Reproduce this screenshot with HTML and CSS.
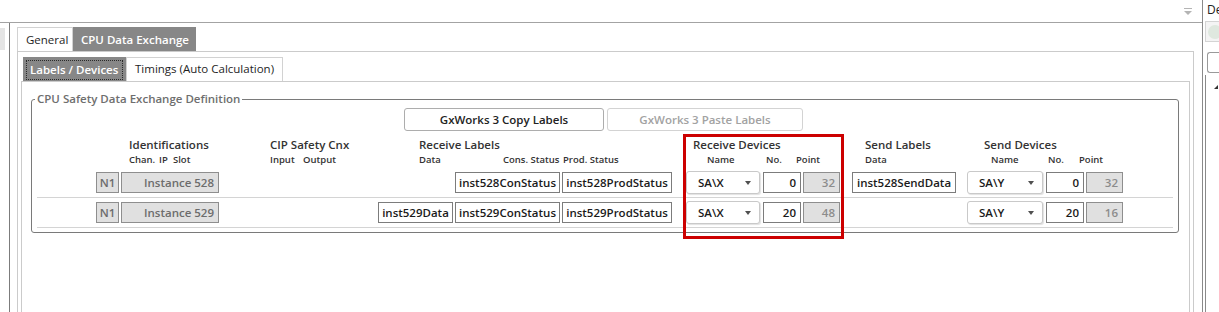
FILE: index.html
```html
<!DOCTYPE html>
<html>
<head>
<meta charset="utf-8">
<link rel="stylesheet" href="styles.css">
</head>
<body>
<div class="app">
  <div class="main">
    <div class="topbar">
      <svg class="pin" width="8" height="7" viewBox="0 0 8 7"><rect x="0" y="0" width="8" height="1" fill="#b4b4b4"/><path d="M0 3 H8 L4 7 Z" fill="#b4b4b4"/></svg>
    </div>
    <div class="body">
      <div class="leftpanel"><div class="leftchip"></div></div>
      <div class="workspace">
        <div class="tabs">
          <div class="tab">General</div>
          <div class="tab active">CPU Data Exchange</div>
        </div>
        <div class="tabpanel">
          <div class="subtabs">
            <div class="subtab active"><span class="focus">Labels / Devices</span></div>
            <div class="subtab">Timings (Auto Calculation)</div>
          </div>
          <div class="subpanel">
            <fieldset class="group">
              <legend>CPU Safety Data Exchange Definition</legend>
              <div class="btnrow">
                <div class="btn">GxWorks 3 Copy Labels</div>
                <div class="btn disabled">GxWorks 3 Paste Labels</div>
              </div>
              <div class="heads">
                <div class="hg g-ident">
                  <div class="ht">Identifications</div>
                  <div class="hs"><span class="w30">Chan.</span><span class="w14">IP</span><span>Slot</span></div>
                </div>
                <div class="hg g-cip">
                  <div class="ht">CIP Safety Cnx</div>
                  <div class="hs"><span class="w33">Input</span><span>Output</span></div>
                </div>
                <div class="hg g-rl">
                  <div class="ht">Receive Labels</div>
                  <div class="hs"><span class="w84">Data</span><span class="w60">Cons. Status</span><span>Prod. Status</span></div>
                </div>
                <div class="hg g-rd">
                  <div class="ht">Receive Devices</div>
                  <div class="hs"><span class="ml14 w59">Name</span><span class="w30">No.</span><span>Point</span></div>
                </div>
                <div class="hg g-sl">
                  <div class="ht">Send Labels</div>
                  <div class="hs"><span>Data</span></div>
                </div>
                <div class="hg g-sd">
                  <div class="ht">Send Devices</div>
                  <div class="hs"><span class="ml7 w57">Name</span><span class="w31">No.</span><span>Point</span></div>
                </div>
              </div>
              <div class="row">
                <div class="cell ro c-chan">N1</div>
                <div class="cell ro c-inst">Instance 528</div>
                <div class="cell c-data empty"></div>
                <div class="cell c-cons">inst528ConStatus</div>
                <div class="cell c-prod">inst528ProdStatus</div>
                <div class="combo c-rdn"><span>SA\X</span><i class="arrow"></i></div>
                <div class="cell num c-rno">0</div>
                <div class="cell pt c-rpt">32</div>
                <div class="cell c-send">inst528SendData</div>
                <div class="combo c-sdn"><span>SA\Y</span><i class="arrow"></i></div>
                <div class="cell num c-sno">0</div>
                <div class="cell pt c-spt">32</div>
              </div>
              <div class="row">
                <div class="cell ro c-chan">N1</div>
                <div class="cell ro c-inst">Instance 529</div>
                <div class="cell c-data">inst529Data</div>
                <div class="cell c-cons">inst529ConStatus</div>
                <div class="cell c-prod">inst529ProdStatus</div>
                <div class="combo c-rdn"><span>SA\X</span><i class="arrow"></i></div>
                <div class="cell num c-rno">20</div>
                <div class="cell pt c-rpt">48</div>
                <div class="cell c-send empty"></div>
                <div class="combo c-sdn"><span>SA\Y</span><i class="arrow"></i></div>
                <div class="cell num c-sno">20</div>
                <div class="cell pt c-spt">16</div>
              </div>
            </fieldset>
          </div>
        </div>
      </div>
    </div>
  </div>
  <div class="rightpanel">
    <div class="rp-title">De</div>
    <div class="rp-iconbox"><span class="rp-circle"></span></div>
    <div class="rp-field"></div>
    <div class="rp-tree"><span class="rp-tri"></span></div>
  </div>
  <div class="highlight"></div>
</div>
</body>
</html>
```
FILE: styles.css
```css
* { box-sizing: border-box; }
html, body { margin: 0; padding: 0; background: #fff; }
body { font-family: "Open Sans", "Noto Sans", sans-serif; font-size: 12px; color: #222; }

.app { position: relative; display: flex; width: 1219px; height: 312px; overflow: hidden; background: #fff; }

.main { width: 1202px; display: flex; flex-direction: column; }
.topbar { height: 22px; display: flex; justify-content: flex-end; align-items: flex-start; padding: 8px 10px 0 0; }
.pin { display: block; }

.body { flex: 1; display: flex; border-top: 1px solid #a3a3a3; }
.leftpanel { width: 10px; border-right: 1px solid #7c7c7c; padding-top: 5px; }
.leftchip { width: 5px; height: 22px; background: #e4e4e4; }

.workspace { flex: 1; padding: 4px 0 0 7px; display: flex; flex-direction: column; }

.tabs { display: flex; height: 24px; }
.tab { height: 24px; line-height: 23px; width: 56px; padding: 0 0 0 8px; border: 1px solid #d2d2d2; border-bottom: none; background: #fff; color: #1e1e1e; font-size: 11.5px; white-space: nowrap; overflow: hidden; }
.tab.active { width: 123px; background: #878787; border-color: #878787; color: #fff; font-weight: 600; padding: 0 0 0 7px; }

.tabpanel { width: 1177px; flex: 1; border: 1px solid #cbcbcb; border-bottom: none; padding: 5px 0 0 3px; display: flex; flex-direction: column; }

.subtabs { display: flex; height: 24px; margin-left: 2px; }
.subtab { height: 24px; line-height: 22px; width: 157px; padding: 0 0 0 8px; border: 1px solid #d2d2d2; border-bottom: none; color: #1e1e1e; font-size: 11.5px; white-space: nowrap; overflow: hidden; }
.subtab.active { width: 103px; background: #878787; border-color: #878787; color: #fff; font-weight: 600; padding: 2px; line-height: 18px; }
.subtab .focus { display: block; height: 20px; border: 1px dotted #2a2a2a; padding: 0 3px; }

.subpanel { width: 1169px; flex: 1; border: 1px solid #cbcbcb; border-bottom: none; padding: 9px 0 0 9px; }

.group { width: 1148px; margin: 0; padding: 0 0 4px 0; border: 1px solid #7a7a7a; border-radius: 3px; min-width: 0; }
.group legend { padding: 0 2px; margin-left: 3px; font-size: 11.5px; font-weight: 600; color: #6e6e6e; line-height: 16px; }

.btnrow { display: flex; gap: 3px; margin: 1px 0 0 372px; }
.btn { width: 200px; height: 23px; line-height: 21px; text-align: center; border: 1px solid #adadad; border-radius: 3px; background: #fff; font-weight: 600; color: #222; font-size: 11.5px; }
.btn.disabled { width: 196px; border-color: #d3d3d3; color: #a2a2a2; }

.heads { display: flex; margin: 6px 0 0 97px; color: #333; }
.hg { flex: none; }
.g-ident { width: 141px; }
.g-cip { width: 149px; }
.g-rl { width: 274px; }
.g-rd { width: 172px; }
.g-sl { width: 119px; }
.ht { font-size: 11.5px; font-weight: 600; line-height: 16px; }
.hs { display: flex; font-size: 9.5px; font-weight: 600; line-height: 13px; white-space: nowrap; }
.hs span { flex: none; }
.w14 { width: 14px; } .w30 { width: 30px; } .w31 { width: 31px; } .w33 { width: 33px; }
.w57 { width: 57px; } .w59 { width: 59px; } .w60 { width: 60px; } .w84 { width: 84px; }
.ml7 { margin-left: 7px; } .ml14 { margin-left: 14px; }

.row { display: flex; align-items: center; height: 30px; margin: 0 5px; border-bottom: 1px solid #d4d4d4; }
.heads + .row { margin-top: 2px; }

.cell { flex: none; height: 21px; line-height: 19px; border: 1px solid #7c7c7c; background: #fff; color: #1a1a1a; font-weight: 600; font-size: 11.5px; text-align: center; white-space: nowrap; overflow: hidden; }
.cell.empty { visibility: hidden; }
.cell.ro { background: #e0e0e0; border-color: #8e8e8e; color: #6c6c6c; }
.cell.num { text-align: right; padding-right: 4px; }
.cell.pt { background: #e0e0e0; border-color: #8e8e8e; color: #8c8c8c; text-align: right; padding-right: 4px; }

.combo { flex: none; height: 23px; display: flex; align-items: center; justify-content: space-between; padding: 0 8px 0 11px; border: 1px solid #c9c9c9; border-radius: 3px; background: #fff; box-shadow: 1px 1px 1px rgba(0,0,0,0.12); font-weight: 600; font-size: 11.5px; color: #1a1a1a; }
.arrow { width: 0; height: 0; border-left: 3.5px solid transparent; border-right: 3.5px solid transparent; border-top: 4px solid #505050; }

.c-chan { margin-left: 59px; width: 23px; }
.c-inst { margin-left: 2px; width: 98px; text-align: right; padding-right: 4px; }
.c-data { margin-left: 159px; width: 75px; }
.c-cons { margin-left: 2px; width: 105px; }
.c-prod { margin-left: 2px; width: 110px; }
.c-rdn { margin-left: 14px; width: 74px; }
.c-rno { margin-left: 3px; width: 38px; }
.c-rpt { margin-left: 2px; width: 37px; }
.c-send { margin-left: 12px; width: 104px; }
.c-sdn { margin-left: 11px; width: 76px; }
.c-sno { margin-left: 3px; width: 38px; }
.c-spt { margin-left: 2px; width: 37px; }

.rightpanel { width: 17px; border-left: 1px solid #8a8a8a; display: flex; flex-direction: column; }
.rp-title { height: 21px; padding: 2px 0 0 4px; font-size: 12px; color: #222; line-height: 16px; white-space: nowrap; overflow: hidden; }
.rp-iconbox { height: 21px; margin-left: 2px; border: 1px solid #d4d4d4; border-right: none; background: #f4f4f4; padding: 3px 0 0 2px; overflow: hidden; }
.rp-circle { display: block; width: 14px; height: 14px; border-radius: 50%; background: #dfe8df; }
.rp-field { height: 21px; margin: 10px 0 0 4px; border: 1px solid #9a9a9a; border-right: none; border-radius: 3px 0 0 3px; background: #fff; }
.rp-tree { flex: 1; margin: 2px 0 0 2px; border-left: 1px solid #8a8a8a; padding: 10px 0 0 8px; }
.rp-tri { display: block; width: 0; height: 0; border-left: 4px solid transparent; border-bottom: 4px solid #333; }

.highlight { position: absolute; left: 683px; top: 134px; width: 161px; height: 105px; border: 3px solid #cc0000; }
```
